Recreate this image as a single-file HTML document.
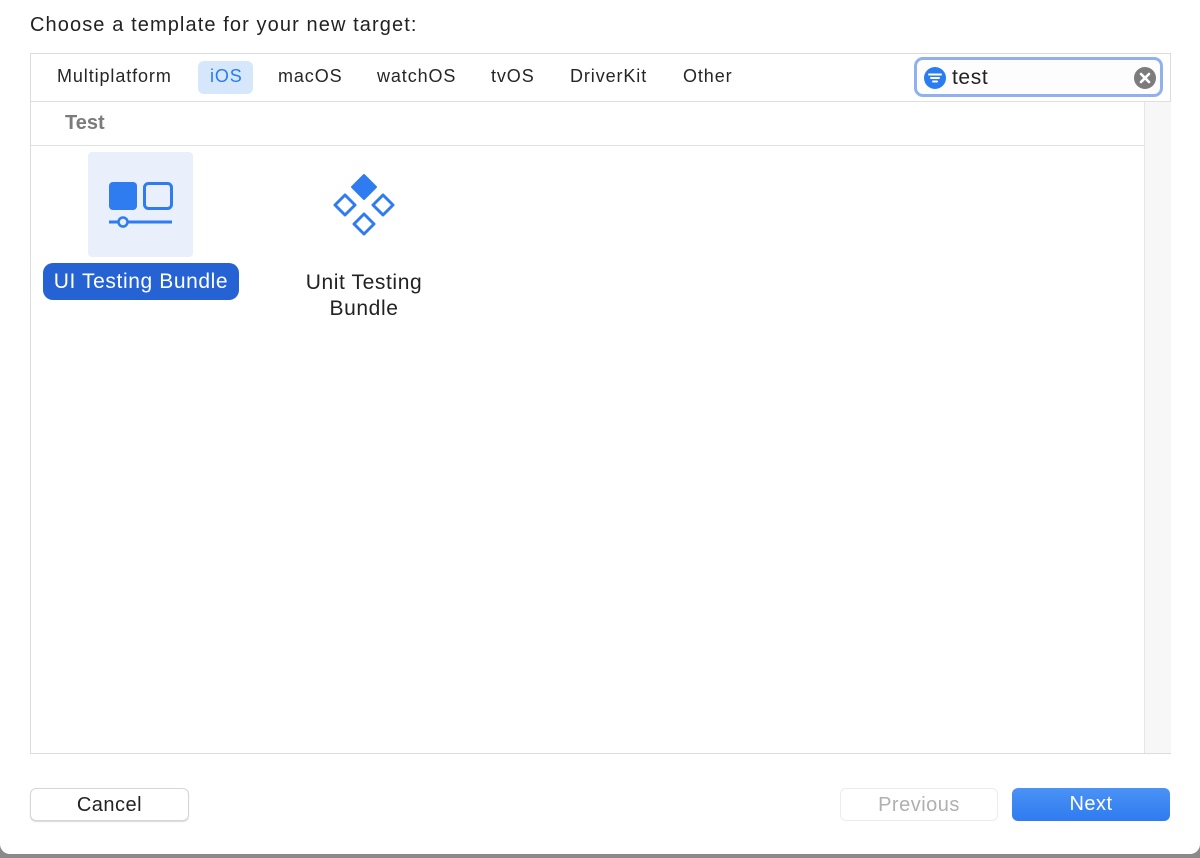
<!DOCTYPE html>
<html><head><style>
body{margin:0;width:1200px;height:858px;background:#8a8a8a;font-family:"Liberation Sans",sans-serif;overflow:hidden;position:relative}
.win{position:absolute;left:0;top:0;width:1200px;height:854px;background:#fff;border-radius:0 0 10px 10px}
.t{position:absolute;white-space:nowrap}
.panel{position:absolute;left:30px;top:53px;width:1139px;height:699px;border:1px solid #dcdcdc;background:#fff}
.tab{position:absolute;top:66px;font-size:18px;color:#262626;letter-spacing:0.9px}
.btn{position:absolute;top:788px;height:33px;border-radius:6px;font-size:20px;text-align:center;line-height:33px;box-sizing:border-box;letter-spacing:0.5px}
</style></head><body>
<div class="win">
<div class="t" style="left:30px;top:14px;font-size:20px;color:#222;letter-spacing:1.1px">Choose a template for your new target:</div>
<div class="panel">
  <div style="position:absolute;left:0;top:47px;width:1139px;height:1px;background:#e0e0e0"></div>
  <div style="position:absolute;left:0;top:91px;width:1113px;height:1px;background:#e0e0e0"></div>
  <div style="position:absolute;left:1113px;top:48px;width:26px;height:651px;background:#f7f7f7;border-left:1px solid #e6e6e6"></div>
</div>
<div style="position:absolute;left:198px;top:61px;width:55px;height:33px;background:#d6e6fb;border-radius:6px"></div>
<div class="tab" style="left:57px">Multiplatform</div>
<div class="tab" style="left:210px;color:#2a7cf0">iOS</div>
<div class="tab" style="left:278px">macOS</div>
<div class="tab" style="left:377px">watchOS</div>
<div class="tab" style="left:491px">tvOS</div>
<div class="tab" style="left:570px">DriverKit</div>
<div class="tab" style="left:683px">Other</div>
<div style="position:absolute;left:914px;top:57px;width:249px;height:40px;box-sizing:border-box;border:3px solid #8fb1ee;border-radius:9px;background:#fdfdfd"></div>
<svg style="position:absolute;left:923px;top:66px" width="24" height="24"><circle cx="12" cy="12" r="11" fill="#2a7cf0"/><path d="M6 8.5h12M8 12h8M10 15.5h4" stroke="#fff" stroke-width="2" stroke-linecap="round"/></svg>
<div class="t" style="left:952px;top:66px;font-size:21px;color:#222;letter-spacing:0.6px">test</div>
<svg style="position:absolute;left:1133px;top:66px" width="24" height="24"><circle cx="12" cy="12" r="11" fill="#7c7c7c"/><path d="M8 8l8 8M16 8l-8 8" stroke="#fff" stroke-width="2.6" stroke-linecap="round"/></svg>
<div class="t" style="left:65px;top:112px;font-size:20px;font-weight:bold;color:#7b7b7b">Test</div>
<div style="position:absolute;left:88px;top:152px;width:105px;height:105px;background:#e9effb;border-radius:4px"></div>
<svg style="position:absolute;left:100px;top:170px" width="80" height="70"><rect x="9" y="12" width="28" height="28" rx="4" fill="#2f7bf0"/><rect x="44.5" y="13.5" width="27" height="25" rx="4" fill="none" stroke="#2f7bf0" stroke-width="3"/><path d="M9 52h63" stroke="#2f7bf0" stroke-width="3"/><circle cx="23" cy="52" r="4.5" fill="#e9effb" stroke="#2f7bf0" stroke-width="2.5"/></svg>
<div style="position:absolute;left:43px;top:263px;width:196px;height:37px;background:#2563d4;border-radius:10px"></div>
<div class="t" style="left:43px;width:196px;text-align:center;top:270px;font-size:21px;color:#fff;letter-spacing:0.6px">UI Testing Bundle</div>
<svg style="position:absolute;left:330px;top:170px" width="68" height="70"><path d="M34 5l12 12-12 12-12-12z" fill="#2f7bf0" stroke="#2f7bf0" stroke-width="2" stroke-linejoin="round"/><g fill="none" stroke="#2f7bf0" stroke-width="3" stroke-linejoin="round"><path d="M15 25l10 10-10 10-10-10z"/><path d="M53 25l10 10-10 10-10-10z"/><path d="M34 44l10 10-10 10-10-10z"/></g></svg>
<div class="t" style="left:284px;width:160px;text-align:center;top:270px;font-size:21px;color:#222;line-height:26px;white-space:normal;letter-spacing:0.6px">Unit Testing<br>Bundle</div>
<div class="btn" style="left:30px;width:159px;background:#fff;border:1px solid #d6d6d6;box-shadow:0 1px 1px rgba(0,0,0,.15);color:#222">Cancel</div>
<div class="btn" style="left:840px;width:158px;background:#fff;border:1px solid #ececec;color:#b0b0b0">Previous</div>
<div class="btn" style="left:1012px;width:158px;background:linear-gradient(#4a92f5,#2f7bf0);color:#fff">Next</div>
</div>
</body></html>
